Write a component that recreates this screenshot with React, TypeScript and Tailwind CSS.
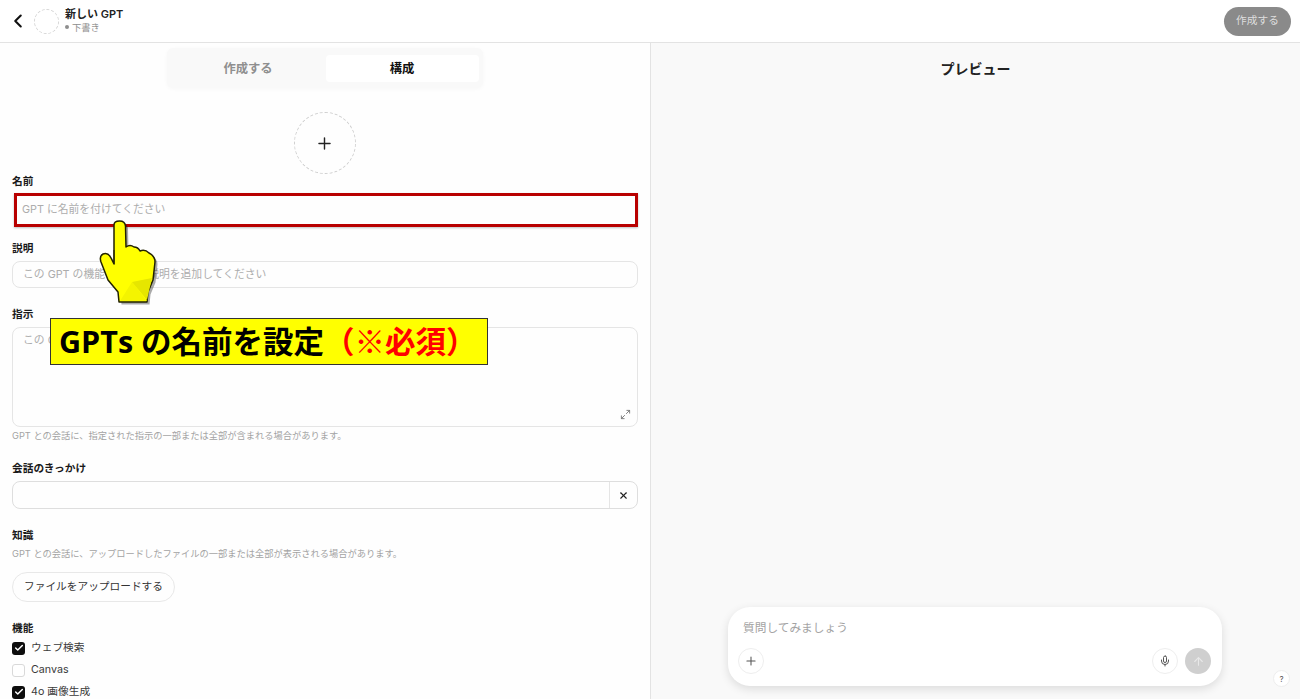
import { ChevronLeft, Plus, X, Check, Mic, ArrowUp, Maximize2 } from "lucide-react";

const font = { fontFamily: "Inter, 'Noto Sans CJK JP', sans-serif" };

function Label({ children, className = "" }: { children: React.ReactNode; className?: string }) {
  return <div className={`text-[10.7px] leading-[14px] font-semibold text-[#1a1a1a] ${className}`}>{children}</div>;
}

function CheckRow({ label, checked }: { label: string; checked: boolean }) {
  return (
    <div className="flex items-center gap-[6px] h-[14px]">
      <span
        className={`flex items-center justify-center w-[13px] h-[13px] rounded-[3px] ${
          checked ? "bg-[#0d0d0d]" : "bg-white border border-[#d9d9d9]"
        }`}
      >
        {checked && <Check size={10} strokeWidth={3.5} color="#fff" />}
      </span>
      <span className="text-[10.7px] leading-[14px] text-[#3a3a3a]">{label}</span>
    </div>
  );
}

function Hand() {
  const d =
    "M24 15 Q24 11 29.5 11 Q35 11 35.5 16 L36 37 Q40 34 44 37 Q48 37 50 41 Q55 39 59 43 Q65 46 65 52 L63 70 L58 82 L57 92 L29 92 L28 82 L18 70 L11 52 Q9 46 13 44 Q18 42 21 48 L24 54 Z";
  return (
    <svg className="absolute left-[90px] top-[210px]" width="80" height="100" viewBox="0 0 80 100">
      <path d={d} fill="#00000055" transform="translate(2.5 2.5)" />
      <path d={d} fill="#ffff00" stroke="#222200" strokeWidth="1.5" strokeLinejoin="round" />
      <path d="M42 72 L57 91 L30 91 Z" fill="#f4f400" />
      <path d="M42 72 L62 68 L57 90 Z" fill="#e6e600" />
      <path d="M24 54 L24 40" stroke="#222200" strokeWidth="1" fill="none" />
    </svg>
  );
}

export default function App() {
  return (
    <div className="relative w-[1300px] h-[699px] overflow-hidden bg-white flex flex-col" style={font}>
      <header className="h-[43px] shrink-0 border-b border-[#e3e3e3] flex items-center pl-[7px] pr-[9px]">
        <ChevronLeft size={22} strokeWidth={2.3} color="#111" />
        <div className="w-[25px] h-[25px] ml-[5px] rounded-full border border-dashed border-[#d5d5d5]" />
        <div className="ml-[6px] -mt-[1px]">
          <div className="text-[11px] leading-[13px] font-semibold text-[#222]">新しい GPT</div>
          <div className="text-[9.3px] leading-[13px] text-[#8e8e8e] flex items-center gap-[3px]">
            <span className="w-[4px] h-[4px] rounded-full bg-[#8e8e8e]" />
            下書き
          </div>
        </div>
        <button className="ml-auto w-[67px] h-[29px] rounded-full bg-[#8a8a8a] text-[10.7px] text-[#dedede]">
          作成する
        </button>
      </header>

      <div className="flex-1 flex min-h-0">
        <main className="w-[651px] shrink-0 border-r border-[#e3e3e3] bg-[#fefefe] pl-[12px] pr-[12px] overflow-hidden">
          <div className="flex justify-center">
            <div className="w-[316px] h-[40px] mt-[5px] mr-[1px] rounded-[6px] bg-[#f9f9f9] shadow-[0_1px_4px_rgba(0,0,0,0.03)] flex items-center pl-[4px] pr-[4px]">
              <div className="w-[155px] pt-[2px] text-center text-[12.3px] font-semibold text-[#8f8f8f]">作成する</div>
              <div className="w-[153px] h-[27px] rounded-[4px] bg-white flex items-center justify-center pt-[2px] text-[12.3px] font-semibold text-[#111]">
                構成
              </div>
            </div>
          </div>

          <div className="flex justify-center mt-[24px]">
            <div className="w-[62px] h-[62px] mr-[1px] rounded-full border border-dashed border-[#cfcfcf] flex items-center justify-center">
              <Plus size={19} strokeWidth={1.8} color="#222" />
            </div>
          </div>

          <Label className="mt-[1px]">名前</Label>
          <div className="h-[29px] mt-[7px] px-[10px] flex items-center text-[10.8px] text-[#adadad]">
            GPT に名前を付けてください
          </div>

          <Label className="mt-[17px]">説明</Label>
          <div className="h-[27px] mt-[5px] rounded-[8px] border border-[#e5e5e5] px-[10px] pt-[1px] flex items-center text-[10.8px] text-[#adadad]">
            この GPT の機能の簡単な説明を追加してください
          </div>

          <Label className="mt-[20px]">指示</Label>
          <div className="relative h-[100px] mt-[5px] rounded-[8px] border border-[#e5e5e5] px-[10px] pt-[6px] text-[10.8px] leading-[14px] text-[#adadad]">
            この GPT は何をしますか？
            <Maximize2 size={11} color="#777" className="absolute right-[6px] bottom-[6px]" />
          </div>
          <div className="mt-[3px] text-[9.25px] leading-[12px] text-[#a3a3a3]">
            GPT との会話に、指定された指示の一部または全部が含まれる場合があります。
          </div>

          <Label className="mt-[20px]">会話のきっかけ</Label>
          <div className="h-[28px] mt-[5px] rounded-[8px] border border-[#dedede] flex justify-end">
            <div className="w-[28px] border-l border-[#e5e5e5] flex items-center justify-center">
              <X size={11} strokeWidth={2.4} color="#222" />
            </div>
          </div>

          <Label className="mt-[20px]">知識</Label>
          <div className="mt-[5px] text-[9.25px] leading-[12px] text-[#a3a3a3]">
            GPT との会話に、アップロードしたファイルの一部または全部が表示される場合があります。
          </div>
          <button className="block mt-[12px] w-[163px] h-[30px] rounded-full border border-[#e8e8e8] text-[10.7px] text-[#333]">
            ファイルをアップロードする
          </button>

          <Label className="mt-[20px]">機能</Label>
          <div className="mt-[5px] flex flex-col gap-[8px]">
            <CheckRow label="ウェブ検索" checked />
            <CheckRow label="Canvas" checked={false} />
            <CheckRow label="4o 画像生成" checked />
          </div>
        </main>

        <section className="flex-1 bg-[#f9f9f9] flex flex-col items-center relative">
          <div className="mt-[17px] text-[14px] leading-[18px] font-bold text-[#222]">プレビュー</div>
          <div className="mt-auto mb-[13px] w-[494px] h-[79px] mr-[1px] rounded-[22px] bg-white shadow-[0_3px_10px_rgba(0,0,0,0.12)] flex flex-col pl-[10px] pr-[11px] pt-[13px] pb-[12px]">
            <div className="pl-[5px] text-[11.7px] leading-[16px] text-[#a3a3a3]">質問してみましょう</div>
            <div className="mt-auto flex items-center">
              <div className="w-[26px] h-[26px] rounded-full border border-[#eeeeee] flex items-center justify-center">
                <Plus size={14} strokeWidth={1.8} color="#555" />
              </div>
              <div className="ml-auto w-[26px] h-[26px] rounded-full border border-[#eeeeee] flex items-center justify-center">
                <Mic size={12} strokeWidth={2} color="#555" />
              </div>
              <div className="ml-[7px] w-[26px] h-[26px] rounded-full bg-[#cfcfcf] flex items-center justify-center">
                <ArrowUp size={13} strokeWidth={2} color="#e8e8e8" />
              </div>
            </div>
          </div>
          <div className="absolute right-[10px] bottom-[12px] w-[17px] h-[17px] rounded-full bg-white border border-[#eeeeee] flex items-center justify-center text-[8px] text-[#555]">
            ?
          </div>
        </section>
      </div>

      {/* Annotation overlays */}
      <div className="absolute left-[14px] top-[193px] w-[624px] h-[34px] border-[3px] border-[#b80000] shadow-[0_1px_2px_rgba(0,0,0,0.25)]" />
      <Hand />
      <div
        className="absolute left-[50px] top-[318px] w-[438px] h-[47px] bg-[#ffff00] border border-[#333] flex items-center pl-[8px] text-[30.5px] font-bold text-black whitespace-nowrap"
        style={{ fontFamily: "'Open Sans', 'Noto Sans CJK JP', sans-serif" }}
      >
        GPTs の名前を設定<span className="text-[#ff0000]">（※必須）</span>
      </div>
    </div>
  );
}
